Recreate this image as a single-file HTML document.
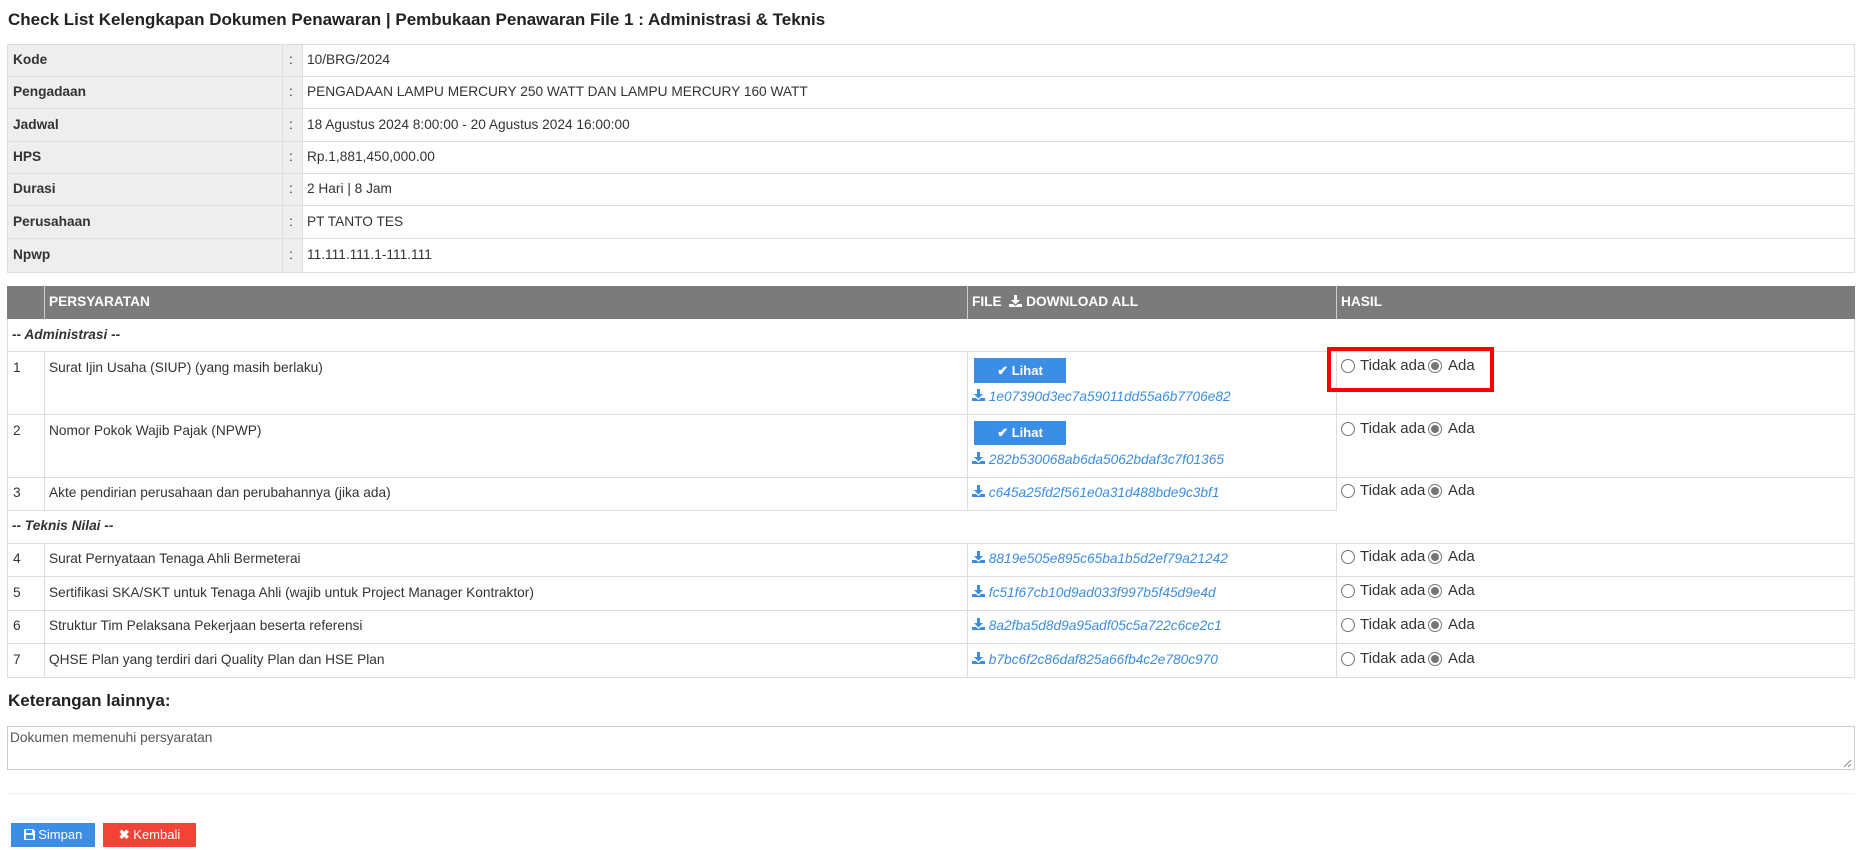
<!DOCTYPE html>
<html><head><meta charset="utf-8"><style>
*{box-sizing:border-box;margin:0;padding:0}
body{width:1859px;height:850px;background:#fff;font-family:"Liberation Sans",Arial,sans-serif;font-size:13.7px;color:#333;position:relative;overflow:hidden}
.a{position:absolute}
.t{position:absolute;white-space:nowrap;line-height:16px}
.hl{position:absolute;height:1px;background:#ddd}
.vl{position:absolute;width:1px;background:#ddd}
.lnk{color:#3c8dde;font-style:italic}
.rad{position:absolute;width:14px;height:14px;border:1px solid #767676;border-radius:50%;background:#fff}
.rad.on::after{content:"";position:absolute;left:2px;top:2px;width:8px;height:8px;border-radius:50%;background:#767676}
.btn{position:absolute;background:#3a8ee6;color:#fff;font-weight:bold;font-size:13px;text-align:center}
</style></head><body>
<div class="t" style="left:8px;top:10px;font-size:17px;font-weight:bold;line-height:20px;color:#222">Check List Kelengkapan Dokumen Penawaran | Pembukaan Penawaran File 1 : Administrasi &amp; Teknis</div>

<div class="a" style="left:7px;top:44px;width:1848px;height:229px;border:1px solid #ddd"></div>
<div class="a" style="left:8px;top:45px;width:294px;height:227px;background:#eee"></div>
<div class="vl" style="left:282px;top:44px;height:229px"></div>
<div class="vl" style="left:302px;top:44px;height:229px"></div>
<div class="hl" style="left:7px;top:76px;width:1848px"></div>
<div class="hl" style="left:7px;top:108px;width:1848px"></div>
<div class="hl" style="left:7px;top:141px;width:1848px"></div>
<div class="hl" style="left:7px;top:173px;width:1848px"></div>
<div class="hl" style="left:7px;top:205px;width:1848px"></div>
<div class="hl" style="left:7px;top:238px;width:1848px"></div>
<div class="t" style="left:13px;top:52px;font-weight:bold">Kode</div><div class="t" style="left:289px;top:52px">:</div><div class="t" style="left:307px;top:52px">10/BRG/2024</div>
<div class="t" style="left:13px;top:84px;font-weight:bold">Pengadaan</div><div class="t" style="left:289px;top:84px">:</div><div class="t" style="left:307px;top:84px">PENGADAAN LAMPU MERCURY 250 WATT DAN LAMPU MERCURY 160 WATT</div>
<div class="t" style="left:13px;top:117px;font-weight:bold">Jadwal</div><div class="t" style="left:289px;top:117px">:</div><div class="t" style="left:307px;top:117px">18 Agustus 2024 8:00:00 - 20 Agustus 2024 16:00:00</div>
<div class="t" style="left:13px;top:149px;font-weight:bold">HPS</div><div class="t" style="left:289px;top:149px">:</div><div class="t" style="left:307px;top:149px">Rp.1,881,450,000.00</div>
<div class="t" style="left:13px;top:181px;font-weight:bold">Durasi</div><div class="t" style="left:289px;top:181px">:</div><div class="t" style="left:307px;top:181px">2 Hari | 8 Jam</div>
<div class="t" style="left:13px;top:214px;font-weight:bold">Perusahaan</div><div class="t" style="left:289px;top:214px">:</div><div class="t" style="left:307px;top:214px">PT TANTO TES</div>
<div class="t" style="left:13px;top:247px;font-weight:bold">Npwp</div><div class="t" style="left:289px;top:247px">:</div><div class="t" style="left:307px;top:247px">11.111.111.1-111.111</div>

<div class="a" style="left:7px;top:286px;width:1848px;height:33px;background:#7b7b7b"></div>
<div class="a" style="left:44px;top:286px;width:1px;height:33px;background:#ccc"></div>
<div class="a" style="left:967px;top:286px;width:1px;height:33px;background:#ccc"></div>
<div class="a" style="left:1336px;top:286px;width:1px;height:33px;background:#ccc"></div>
<div class="t" style="left:49px;top:294px;color:#fff;font-weight:bold">PERSYARATAN</div>
<div class="t" style="left:972px;top:294px;color:#fff;font-weight:bold">FILE &nbsp;<svg width="13" height="12" viewBox="0 0 13 12" style="vertical-align:-1px"><path d="M5 0h3v5h3l-4.5 4.5L2 5h3z" fill="#fff"/><path d="M0 9h4l2.5 2L9 9h4v3H0z" fill="#fff"/></svg> DOWNLOAD ALL</div>
<div class="t" style="left:1341px;top:294px;color:#fff;font-weight:bold">HASIL</div>

<div class="vl" style="left:7px;top:319px;height:359px"></div>
<div class="vl" style="left:1854px;top:319px;height:359px"></div>
<div class="hl" style="left:7px;top:351px;width:1848px"></div>
<div class="hl" style="left:7px;top:414px;width:1848px"></div>
<div class="hl" style="left:7px;top:477px;width:1848px"></div>
<div class="hl" style="left:7px;top:510px;width:1330px"></div>
<div class="hl" style="left:7px;top:543px;width:1848px"></div>
<div class="hl" style="left:7px;top:576px;width:1848px"></div>
<div class="hl" style="left:7px;top:610px;width:1848px"></div>
<div class="hl" style="left:7px;top:643px;width:1848px"></div>
<div class="hl" style="left:7px;top:677px;width:1848px"></div>
<div class="vl" style="left:44px;top:351px;height:159px"></div>
<div class="vl" style="left:967px;top:351px;height:159px"></div>
<div class="vl" style="left:1336px;top:351px;height:159px"></div>
<div class="vl" style="left:44px;top:543px;height:134px"></div>
<div class="vl" style="left:967px;top:543px;height:134px"></div>
<div class="vl" style="left:1336px;top:543px;height:134px"></div>

<div class="t" style="left:12px;top:327px;font-weight:bold;font-style:italic">-- Administrasi --</div>
<div class="t" style="left:12px;top:518px;font-weight:bold;font-style:italic">-- Teknis Nilai --</div>

<div class="t" style="left:13px;top:360px">1</div><div class="t" style="left:49px;top:360px">Surat Ijin Usaha (SIUP) (yang masih berlaku)</div>
<div class="t" style="left:13px;top:423px">2</div><div class="t" style="left:49px;top:423px">Nomor Pokok Wajib Pajak (NPWP)</div>
<div class="t" style="left:13px;top:485px">3</div><div class="t" style="left:49px;top:485px">Akte pendirian perusahaan dan perubahannya (jika ada)</div>
<div class="t" style="left:13px;top:551px">4</div><div class="t" style="left:49px;top:551px">Surat Pernyataan Tenaga Ahli Bermeterai</div>
<div class="t" style="left:13px;top:585px">5</div><div class="t" style="left:49px;top:585px">Sertifikasi SKA/SKT untuk Tenaga Ahli (wajib untuk Project Manager Kontraktor)</div>
<div class="t" style="left:13px;top:618px">6</div><div class="t" style="left:49px;top:618px">Struktur Tim Pelaksana Pekerjaan beserta referensi</div>
<div class="t" style="left:13px;top:652px">7</div><div class="t" style="left:49px;top:652px">QHSE Plan yang terdiri dari Quality Plan dan HSE Plan</div>

<div class="btn" style="left:974px;top:358px;width:92px;height:25px;line-height:25px">✔ Lihat</div>
<div class="btn" style="left:974px;top:421px;width:92px;height:24px;line-height:24px">✔ Lihat</div>

<div class="t lnk" style="left:972px;top:389px"><svg width="13" height="12" viewBox="0 0 13 12"><path d="M5 0h3v5h3l-4.5 4.5L2 5h3z" fill="#3c8dde"/><path d="M0 9h4l2.5 2L9 9h4v3H0z" fill="#3c8dde"/></svg> 1e07390d3ec7a59011dd55a6b7706e82</div>
<div class="t lnk" style="left:972px;top:452px"><svg width="13" height="12" viewBox="0 0 13 12"><path d="M5 0h3v5h3l-4.5 4.5L2 5h3z" fill="#3c8dde"/><path d="M0 9h4l2.5 2L9 9h4v3H0z" fill="#3c8dde"/></svg> 282b530068ab6da5062bdaf3c7f01365</div>
<div class="t lnk" style="left:972px;top:485px"><svg width="13" height="12" viewBox="0 0 13 12"><path d="M5 0h3v5h3l-4.5 4.5L2 5h3z" fill="#3c8dde"/><path d="M0 9h4l2.5 2L9 9h4v3H0z" fill="#3c8dde"/></svg> c645a25fd2f561e0a31d488bde9c3bf1</div>
<div class="t lnk" style="left:972px;top:551px"><svg width="13" height="12" viewBox="0 0 13 12"><path d="M5 0h3v5h3l-4.5 4.5L2 5h3z" fill="#3c8dde"/><path d="M0 9h4l2.5 2L9 9h4v3H0z" fill="#3c8dde"/></svg> 8819e505e895c65ba1b5d2ef79a21242</div>
<div class="t lnk" style="left:972px;top:585px"><svg width="13" height="12" viewBox="0 0 13 12"><path d="M5 0h3v5h3l-4.5 4.5L2 5h3z" fill="#3c8dde"/><path d="M0 9h4l2.5 2L9 9h4v3H0z" fill="#3c8dde"/></svg> fc51f67cb10d9ad033f997b5f45d9e4d</div>
<div class="t lnk" style="left:972px;top:618px"><svg width="13" height="12" viewBox="0 0 13 12"><path d="M5 0h3v5h3l-4.5 4.5L2 5h3z" fill="#3c8dde"/><path d="M0 9h4l2.5 2L9 9h4v3H0z" fill="#3c8dde"/></svg> 8a2fba5d8d9a95adf05c5a722c6ce2c1</div>
<div class="t lnk" style="left:972px;top:652px"><svg width="13" height="12" viewBox="0 0 13 12"><path d="M5 0h3v5h3l-4.5 4.5L2 5h3z" fill="#3c8dde"/><path d="M0 9h4l2.5 2L9 9h4v3H0z" fill="#3c8dde"/></svg> b7bc6f2c86daf825a66fb4c2e780c970</div>

<div class="rad" style="left:1341px;top:359px"></div><div class="t" style="left:1360px;top:358px;font-size:15px">Tidak ada</div><div class="rad on" style="left:1428px;top:359px"></div><div class="t" style="left:1448px;top:358px;font-size:15px">Ada</div>
<div class="rad" style="left:1341px;top:422px"></div><div class="t" style="left:1360px;top:421px;font-size:15px">Tidak ada</div><div class="rad on" style="left:1428px;top:422px"></div><div class="t" style="left:1448px;top:421px;font-size:15px">Ada</div>
<div class="rad" style="left:1341px;top:484px"></div><div class="t" style="left:1360px;top:483px;font-size:15px">Tidak ada</div><div class="rad on" style="left:1428px;top:484px"></div><div class="t" style="left:1448px;top:483px;font-size:15px">Ada</div>
<div class="rad" style="left:1341px;top:550px"></div><div class="t" style="left:1360px;top:549px;font-size:15px">Tidak ada</div><div class="rad on" style="left:1428px;top:550px"></div><div class="t" style="left:1448px;top:549px;font-size:15px">Ada</div>
<div class="rad" style="left:1341px;top:584px"></div><div class="t" style="left:1360px;top:583px;font-size:15px">Tidak ada</div><div class="rad on" style="left:1428px;top:584px"></div><div class="t" style="left:1448px;top:583px;font-size:15px">Ada</div>
<div class="rad" style="left:1341px;top:618px"></div><div class="t" style="left:1360px;top:617px;font-size:15px">Tidak ada</div><div class="rad on" style="left:1428px;top:618px"></div><div class="t" style="left:1448px;top:617px;font-size:15px">Ada</div>
<div class="rad" style="left:1341px;top:652px"></div><div class="t" style="left:1360px;top:651px;font-size:15px">Tidak ada</div><div class="rad on" style="left:1428px;top:652px"></div><div class="t" style="left:1448px;top:651px;font-size:15px">Ada</div>

<div class="a" style="left:1327px;top:347px;width:167px;height:45px;border:4px solid #f00"></div>

<div class="t" style="left:8px;top:691px;font-size:17px;font-weight:bold;line-height:20px;color:#222">Keterangan lainnya:</div>
<div class="a" style="left:7px;top:726px;width:1848px;height:44px;border:1px solid #ccc"></div>
<div class="t" style="left:10px;top:730px;color:#555">Dokumen memenuhi persyaratan</div>
<svg class="a" style="left:1843px;top:759px" width="9" height="9"><path d="M8 1L1 8M8 5L5 8" stroke="#888"/></svg>
<div class="hl" style="left:7px;top:793px;width:1848px;background:#eee"></div>

<div class="a" style="left:11px;top:823px;width:84px;height:24px;background:#3a8ee6;color:#fff;font-size:13px;line-height:24px;text-align:center"><svg width="11" height="11" viewBox="0 0 11 11" style="vertical-align:-1px"><path d="M0 0h9l2 2v9H0z" fill="#fff"/><rect x="2" y="1" width="6" height="3" fill="#3a8ee6"/><rect x="2" y="6" width="7" height="4" fill="#3a8ee6"/></svg> Simpan</div>
<div class="a" style="left:103px;top:823px;width:93px;height:24px;background:#f44336;color:#fff;font-size:13px;line-height:24px;text-align:center"><b>✖</b> Kembali</div>
</body></html>
